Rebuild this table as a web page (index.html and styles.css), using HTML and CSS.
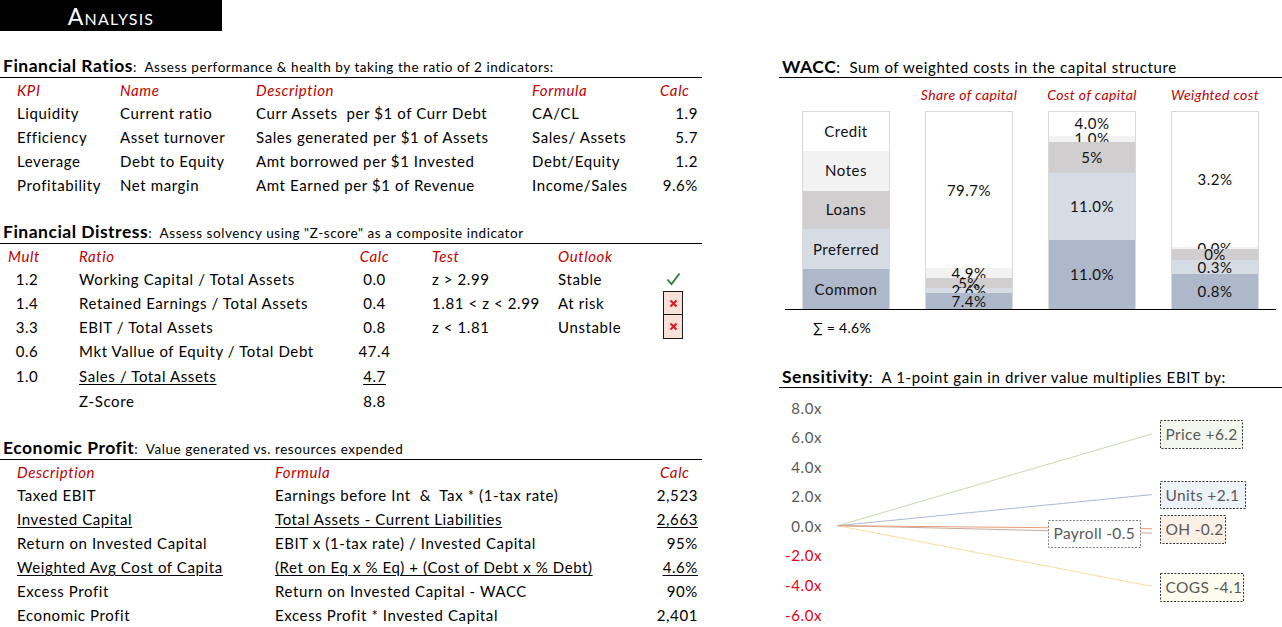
FILE: index.html
```html
<!DOCTYPE html>
<html>
<head>
<meta charset="utf-8">
<title>Analysis</title>
<link rel="stylesheet" href="styles.css">
</head>
<body>
<div class="title">Analysis</div>
<div class="cols">
  <div class="left">
    <div class="head"><div class="ht"><b>Financial Ratios</b><span class="desc">:&nbsp; Assess performance &amp; health by taking the ratio of 2 indicators:</span></div></div>
    <div class="tbl ratios">
      <div class="h">KPI</div><div class="h">Name</div><div class="h">Description</div><div class="h">Formula</div><div class="h calc-h">Calc</div>
      <div>Liquidity</div><div>Current ratio</div><div>Curr Assets&nbsp; per $1 of Curr Debt</div><div>CA/CL</div><div class="num">1.9</div>
      <div>Efficiency</div><div>Asset turnover</div><div>Sales generated per $1 of Assets</div><div>Sales/ Assets</div><div class="num">5.7</div>
      <div>Leverage</div><div>Debt to Equity</div><div>Amt borrowed per $1 Invested</div><div>Debt/Equity</div><div class="num">1.2</div>
      <div>Profitability</div><div>Net margin</div><div>Amt Earned per $1 of Revenue</div><div>Income/Sales</div><div class="num">9.6%</div>
    </div>

    <div class="head"><div class="ht"><b>Financial Distress</b><span class="desc">:&nbsp; Assess solvency using "Z-score" as a composite indicator</span></div></div>
    <div class="tbl distress">
      <div class="h mult-h">Mult</div><div class="h pl">Ratio</div><div class="h ctr">Calc</div><div class="h pt">Test</div><div class="h">Outlook</div><div></div>
      <div class="ctr">1.2</div><div class="pl">Working Capital / Total Assets</div><div class="ctr">0.0</div><div class="pt">z &gt; 2.99</div><div>Stable</div><div class="icon"><svg class="check" width="15" height="14" viewBox="0 0 15 14"><path d="M1.5 7.5 L5.5 12 L13.5 1.5"/></svg></div>
      <div class="ctr">1.4</div><div class="pl">Retained Earnings / Total Assets</div><div class="ctr">0.4</div><div class="pt">1.81 &lt; z &lt; 2.99</div><div>At risk</div><div class="icon xbox"><svg class="xmark" width="9" height="9" viewBox="0 0 9 9"><path d="M1.5 1.5 L7.5 7.5 M7.5 1.5 L1.5 7.5"/></svg></div>
      <div class="ctr">3.3</div><div class="pl">EBIT / Total Assets</div><div class="ctr">0.8</div><div class="pt">z &lt; 1.81</div><div>Unstable</div><div class="icon xbox next"><svg class="xmark" width="9" height="9" viewBox="0 0 9 9"><path d="M1.5 1.5 L7.5 7.5 M7.5 1.5 L1.5 7.5"/></svg></div>
      <div class="ctr">0.6</div><div class="pl">Mkt Vallue of Equity / Total Debt</div><div class="ctr">47.4</div><div></div><div></div><div></div>
      <div class="ctr">1.0</div><div class="pl"><u>Sales / Total Assets</u></div><div class="ctr"><u>4.7</u></div><div></div><div></div><div></div>
      <div></div><div class="pl">Z-Score</div><div class="ctr">8.8</div><div></div><div></div><div></div>
    </div>

    <div class="head"><div class="ht"><b>Economic Profit</b><span class="desc">:&nbsp; Value generated vs. resources expended</span></div></div>
    <div class="tbl econ">
      <div class="h">Description</div><div class="h">Formula</div><div class="h calc-h">Calc</div>
      <div>Taxed EBIT</div><div>Earnings before Int &nbsp;&amp;&nbsp; Tax * (1-tax rate)</div><div class="num">2,523</div>
      <div><u>Invested Capital</u></div><div><u>Total Assets - Current Liabilities</u></div><div class="num"><u>2,663</u></div>
      <div>Return on Invested Capital</div><div>EBIT x (1-tax rate) / Invested Capital</div><div class="num">95%</div>
      <div><u>Weighted Avg Cost of Capita</u></div><div><u>(Ret on Eq x % Eq) + (Cost of Debt x % Debt)</u></div><div class="num"><u>4.6%</u></div>
      <div>Excess Profit</div><div>Return on Invested Capital - WACC</div><div class="num">90%</div>
      <div>Economic Profit</div><div>Excess Profit * Invested Capital</div><div class="num">2,401</div>
    </div>
  </div>

  <div class="right">
    <div class="head"><div class="ht"><b>WACC</b><span class="desc big">:&nbsp; Sum of weighted costs in the capital structure</span></div></div>
    <div class="sub">
      <div class="subcell"></div>
      <div class="subcell">Share of capital</div>
      <div class="subcell">Cost of capital</div>
      <div class="subcell">Weighted cost</div>
    </div>
    <div class="bars">
      <div class="bar legend">
        <div class="seg s-credit" style="height:39px">Credit</div>
        <div class="seg s-notes" style="height:40px">Notes</div>
        <div class="seg s-loans" style="height:39px">Loans</div>
        <div class="seg s-pref" style="height:40px">Preferred</div>
        <div class="seg s-common" style="height:40px">Common</div>
      </div>
      <div class="bar">
        <div class="seg s-credit" style="height:157px">79.7%</div>
        <div class="seg s-notes" style="height:10px">4.9%</div>
        <div class="seg s-loans" style="height:10px">5%</div>
        <div class="seg s-pref" style="height:5px">2.6%</div>
        <div class="seg s-common" style="height:16px">7.4%</div>
      </div>
      <div class="bar">
        <div class="seg s-credit" style="height:24px">4.0%</div>
        <div class="seg s-notes" style="height:6px">1.0%</div>
        <div class="seg s-loans" style="height:31px">5%</div>
        <div class="seg s-pref" style="height:68px">11.0%</div>
        <div class="seg s-common" style="height:69px">11.0%</div>
      </div>
      <div class="bar">
        <div class="seg s-credit" style="height:136px">3.2%</div>
        <div class="seg s-notes" style="height:2px">0.0%</div>
        <div class="seg s-loans" style="height:11px">0%</div>
        <div class="seg s-pref" style="height:14px">0.3%</div>
        <div class="seg s-common" style="height:35px">0.8%</div>
      </div>
    </div>
    <div class="sum">&#8721; = 4.6%</div>

    <div class="head sens-head"><div class="ht"><b>Sensitivity</b><span class="desc big">:&nbsp; A 1-point gain in driver value multiplies EBIT by:</span></div></div>
    <svg class="chart" width="503" height="239" viewBox="0 0 503 239">
      <g class="axis">
        <text x="43" y="25.5">8.0x</text>
        <text x="43" y="55.1">6.0x</text>
        <text x="43" y="84.6">4.0x</text>
        <text x="43" y="114.2">2.0x</text>
        <text x="43" y="143.8">0.0x</text>
        <text class="neg" x="43" y="173.4">-2.0x</text>
        <text class="neg" x="43" y="202.9">-4.0x</text>
        <text class="neg" x="43" y="232.5">-6.0x</text>
      </g>
      <line class="ln-price" x1="58.7" y1="137.7" x2="373" y2="45.9"/>
      <line class="ln-units" x1="58.7" y1="137.7" x2="373" y2="106.6"/>
      <line class="ln-cogs" x1="58.7" y1="137.7" x2="373" y2="198.4"/>
      <line class="ln-pay" x1="58.7" y1="137.7" x2="373" y2="145.1"/>
      <line class="ln-oh" x1="58.7" y1="137.7" x2="373" y2="140.7"/>
      <rect class="lb lb-price" x="381.5" y="32.5" width="82" height="28"/>
      <text class="lbt" x="386.5" y="51.5">Price +6.2</text>
      <rect class="lb lb-units" x="381.5" y="93.5" width="85" height="27"/>
      <text class="lbt" x="386.5" y="112.5">Units +2.1</text>
      <rect class="lb lb-oh" x="381.5" y="127.5" width="65" height="28"/>
      <text class="lbt" x="386.5" y="146.5">OH -0.2</text>
      <rect class="lb lb-pay" x="269.5" y="132.5" width="92" height="27"/>
      <text class="lbt" x="274.5" y="151">Payroll -0.5</text>
      <rect class="lb lb-cogs" x="381.5" y="185.5" width="83" height="28"/>
      <text class="lbt" x="386.5" y="204.5">COGS -4.1</text>
    </svg>
  </div>
</div>
</body>
</html>
```

FILE: styles.css
```css
* { box-sizing: border-box; margin: 0; padding: 0; }

body {
  margin: 0;
  width: 1282px;
  height: 627px;
  overflow: hidden;
  background: #ffffff;
  color: #000000;
  font-family: Lato, "Open Sans", sans-serif;
  font-size: 15px;
  letter-spacing: 0.6px;
}

.title {
  width: 222px;
  height: 31px;
  background: #000000;
  color: #ffffff;
  font-size: 23px;
  font-variant: small-caps;
  letter-spacing: 1.2px;
  display: flex;
  align-items: center;
  justify-content: center;
}

.cols {
  display: flex;
  gap: 77px;
}

.left { width: 702px; }
.right { width: 503px; }

.head {
  height: 47px;
  border-bottom: 1px solid #000000;
  display: flex;
  align-items: flex-end;
  padding: 0 0 0 3px;
  white-space: nowrap;
}

.head .ht { line-height: 19px; }
.head b { font-size: 17.5px; font-weight: 700; letter-spacing: 0.5px; }
.head .desc { font-size: 13.5px; letter-spacing: 0.55px; }
.head .desc.big { font-size: 15px; letter-spacing: 0.6px; }

.sens-head { height: 43px; }

.tbl {
  display: grid;
  grid-template-rows: 23px;
  grid-auto-rows: 24px;
  align-items: center;
  white-space: nowrap;
}

.tbl > div { line-height: 20px; }
.tbl .h { color: #c00000; font-style: italic; }
.tbl .num { text-align: right; }
.tbl .calc-h { padding-left: 22px; }
.tbl u { text-decoration: underline; text-underline-offset: 2px; }

.ratios {
  grid-template-columns: 103px 136px 276px 106px 60px;
  padding-left: 17px;
}

.distress {
  grid-template-columns: 54px 286px 69px 149px 105px 20px;
  grid-template-rows: 23px 24px 24px 24px 24px 26px 24px;
}

.distress .ctr { text-align: center; }
.distress .mult-h { text-align: left; padding-left: 8px; }
.distress .pl { padding-left: 25px; }
.distress .pt { padding-left: 23px; }

.icon {
  height: 24px;
  display: flex;
  align-items: center;
  justify-content: center;
}

.check path {
  fill: none;
  stroke: #2e7d32;
  stroke-width: 1.8;
}

.xbox {
  background: #f9e0d8;
  border: 1px solid #1a1a1a;
}

.xbox.next { border-top: none; }

.xmark path {
  fill: none;
  stroke: #e8141c;
  stroke-width: 2;
}

.econ {
  grid-template-columns: 258px 363px 60px;
  padding-left: 17px;
}

/* WACC */
.sub {
  display: flex;
  gap: 35px;
  padding-left: 23px;
  height: 33px;
  align-items: center;
}

.subcell {
  width: 88px;
  white-space: nowrap;
  color: #c00000;
  font-style: italic;
  font-size: 14px;
  letter-spacing: 0.4px;
  display: flex;
  justify-content: center;
}

.bars {
  margin: 0 6px;
  padding-left: 17px;
  height: 199px;
  border-bottom: 1px solid #000000;
  display: flex;
  gap: 35px;
  align-items: flex-end;
}

.bar {
  width: 88px;
  height: 198px;
  border: 1px solid #d9d9d9;
  border-bottom: none;
  display: flex;
  flex-direction: column;
}

.seg {
  display: flex;
  align-items: center;
  justify-content: center;
  line-height: 1;
  overflow: visible;
  white-space: nowrap;
  font-size: 15px;
  letter-spacing: 0.5px;
  color: #111111;
}

.s-credit { background: #ffffff; }
.s-notes { background: #f2f2f2; }
.s-loans { background: #d0cece; }
.s-pref { background: #d6dce4; }
.s-common { background: #adb9ca; }

.sum {
  height: 35px;
  padding-left: 34px;
  display: flex;
  align-items: center;
  font-size: 14px;
  letter-spacing: 0.3px;
}

/* Sensitivity chart */
.chart { display: block; }

.axis text {
  font-family: Lato, "Open Sans", sans-serif;
  font-size: 15px;
  letter-spacing: 0.6px;
  fill: #595959;
  text-anchor: end;
}

.axis text.neg { fill: #e3001b; }

.ln-price { stroke: #c9d9b3; stroke-width: 1; }
.ln-units { stroke: #a9b8d9; stroke-width: 1; }
.ln-oh { stroke: #e6a07a; stroke-width: 1; }
.ln-pay { stroke: #c7a99b; stroke-width: 1; }
.ln-cogs { stroke: #f8dc9f; stroke-width: 1; }

.lb {
  stroke: #333333;
  stroke-width: 1;
  stroke-dasharray: 2 1.5;
}

.lb-price { fill: #f3f7ee; }
.lb-units { fill: #eef2fa; }
.lb-oh { fill: #fcefe6; }
.lb-pay { fill: #ffffff; stroke: #7f7f7f; }
.lb-cogs { fill: #fefcee; }

.lbt {
  font-family: Lato, "Open Sans", sans-serif;
  font-size: 15.5px;
  letter-spacing: 0.35px;
  fill: #595959;
}
```
